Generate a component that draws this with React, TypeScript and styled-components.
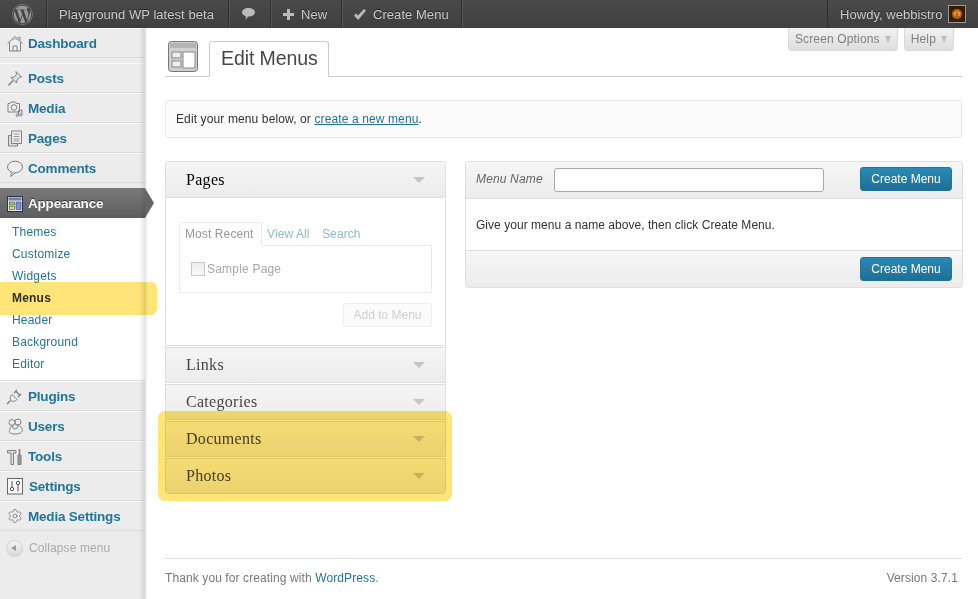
import React from "react";
import styled, { createGlobalStyle } from "styled-components";
import { FaWordpress } from "react-icons/fa";
import { Settings as GearIcon } from "lucide-react";

const Global = createGlobalStyle`
  html, body { margin: 0; padding: 0; background: #fff; height: 100%; overflow: hidden; }
  * { box-sizing: border-box; }
  body { font: 12px "Liberation Sans", Arial, sans-serif; color: #333; }
`;

const Page = styled.div`
  position: relative;
  width: 978px;
  height: 599px;
  overflow: hidden;
`;

const AdminBar = styled.header`
  display: flex;
  height: 28px;
  background: linear-gradient(#4a4a4a, #3f3f3f);
  color: #ccc;
  font-size: 13px;
  letter-spacing: 0.05px;
  text-shadow: 0 -1px 0 #222;
`;

const BarItem = styled.div<{ $w: number }>`
  display: flex;
  align-items: center;
  gap: 7px;
  width: ${(p) => p.$w}px;
  padding-left: 12px;
  border-right: 1px solid #2f2f2f;
  box-shadow: 1px 0 0 #555;
  &:last-child {
    gap: 5px;
    border-right: 0;
    box-shadow: none;
    margin-left: auto;
    border-left: 1px solid #2f2f2f;
  }
`;

const Avatar = styled.span`
  display: block;
  flex: none;
  width: 18px;
  height: 18px;
  border: 1px solid #999;
  background: #3a1c06;
  margin-left: 1px;
`;

const Shell = styled.div`
  display: grid;
  grid-template-columns: 145px 1fr;
  height: 571px;
`;

const Sidebar = styled.nav`
  background: #ececec;
  box-shadow: 1px 0 2px rgba(0, 0, 0, 0.15);
  position: relative;
  z-index: 1;
  &::after {
    content: "";
    position: absolute;
    top: 0;
    right: 0;
    bottom: 0;
    width: 6px;
    background: linear-gradient(90deg, rgba(0, 0, 0, 0), rgba(0, 0, 0, 0.1));
    pointer-events: none;
  }
`;

const MenuItem = styled.div<{ $gap?: boolean; $iconGap?: number }>`
  display: flex;
  align-items: center;
  height: 30px;
  padding-left: 7px;
  gap: ${(p) => p.$iconGap ?? 5}px;
  border-bottom: 1px solid #dadada;
  border-top: 1px solid #f8f8f8;
  margin-bottom: ${(p) => (p.$gap ? 5 : 0)}px;
  font-size: 13.5px;
  font-weight: 700;
  color: #21759b;
  letter-spacing: -0.2px;
`;

const ActiveItem = styled.div`
  position: relative;
  display: flex;
  align-items: center;
  height: 30px;
  padding-left: 7px;
  gap: 5px;
  background: linear-gradient(#7a7a7a, #5e5e5e);
  font-size: 13.5px;
  font-weight: 700;
  color: #fff;
  letter-spacing: -0.2px;
  text-shadow: 0 -1px 0 #333;
  &::after {
    content: "";
    position: absolute;
    left: 145px;
    top: 0;
    border-left: 9px solid #666;
    border-top: 15px solid transparent;
    border-bottom: 15px solid transparent;
  }
`;

const SubMenu = styled.div`
  background: #fff;
  height: 163px;
  padding-top: 3px;
  border-bottom: 1px solid #dfdfdf;
`;

const SubItem = styled.div<{ $current?: boolean }>`
  height: 22px;
  line-height: 22px;
  padding-left: 12px;
  font-size: 12px;
  letter-spacing: 0.2px;
  color: ${(p) => (p.$current ? "#333" : "#21759b")};
  font-weight: ${(p) => (p.$current ? 700 : 400)};
`;

const Collapse = styled.div`
  display: flex;
  align-items: center;
  gap: 6px;
  padding-left: 6px;
  color: #aaa;
  font-size: 12px;
  letter-spacing: 0.1px;
  height: 34px;
`;

const CollapseDot = styled.span`
  width: 17px;
  height: 17px;
  border-radius: 50%;
  border: 1px solid #d0d0d0;
  background: linear-gradient(#f4f4f4, #d9d9d9);
  display: flex;
  align-items: center;
  justify-content: center;
  &::before {
    content: "";
    border-right: 5px solid #999;
    border-top: 3px solid transparent;
    border-bottom: 3px solid transparent;
    margin-left: -2px;
  }
`;

const Main = styled.main`
  display: flex;
  flex-direction: column;
  padding: 0 16px 0 20px;
  min-width: 0;
`;

const ScreenMeta = styled.div`
  display: flex;
  justify-content: flex-end;
  gap: 6px;
  height: 13px;
  margin-right: 8px;
  align-items: flex-start;
`;

const MetaTab = styled.div`
  flex: none;
  display: flex;
  align-items: center;
  gap: 5px;
  height: 23px;
  padding: 0 6px;
  background: linear-gradient(#f1f1f1, #dedede);
  border: 1px solid #d9d9d9;
  border-top: 0;
  border-radius: 0 0 4px 4px;
  color: #808080;
  font-size: 12px;
  letter-spacing: 0.15px;
  &::after {
    content: "";
    border-top: 7px solid #bbb;
    border-left: 3.5px solid transparent;
    border-right: 3.5px solid transparent;
  }
`;

const TitleRow = styled.div`
  display: flex;
  align-items: flex-end;
  height: 36px;
  border-bottom: 1px solid #ccc;
  padding-left: 3px;
`;

const TitleIcon = styled.svg`
  width: 30px;
  height: 31px;
  margin-bottom: 4px;
  margin-right: 11px;
`;

const TitleTab = styled.h2`
  margin: 0 0 -1px;
  width: 120px;
  height: 36px;
  padding-left: 11px;
  line-height: 33px;
  font-size: 19.5px;
  letter-spacing: -0.1px;
  font-weight: 400;
  color: #464646;
  background: #fff;
  border: 1px solid #ccc;
  border-bottom-color: #fff;
  border-radius: 3px 3px 0 0;
`;

const Notice = styled.div`
  margin-top: 23px;
  height: 38px;
  line-height: 36px;
  padding-left: 10px;
  background: #fbfbfb;
  border: 1px solid #e8e8e8;
  border-radius: 3px;
  color: #333;
  font-size: 12px;
  letter-spacing: 0.12px;
  a { color: #21759b; text-decoration: underline; }
`;

const Columns = styled.div`
  display: flex;
  gap: 19px;
  margin-top: 23px;
`;

const LeftCol = styled.div`
  width: 281px;
  flex: none;
`;

const Accordion = styled.section<{ $open?: boolean }>`
  border: 1px solid #dfdfdf;
  border-radius: ${(p) => (p.$open ? "3px 3px 0 0" : "0")};
  margin-top: ${(p) => (p.$open ? 0 : 1)}px;
  &:last-child { border-radius: 0 0 3px 3px; }
`;

const AccordionHead = styled.div<{ $dark?: boolean }>`
  display: flex;
  align-items: center;
  justify-content: space-between;
  height: ${(p) => (p.$dark ? 36 : 34)}px;
  padding: 0 20px;
  background: linear-gradient(#f5f5f5, #ececec);
  border-bottom: ${(p) => (p.$dark ? "1px solid #dfdfdf" : "0")};
  font-family: "Liberation Serif", Georgia, serif;
  font-size: 16px;
  letter-spacing: 0.3px;
  color: ${(p) => (p.$dark ? "#000" : "#464646")};
  &::after {
    content: "";
    border-top: 6px solid #c6c6c6;
    border-left: 6px solid transparent;
    border-right: 6px solid transparent;
  }
`;

const AccordionBody = styled.div`
  height: 147px;
  padding: 24px 13px 0;
  background: #fff;
`;

const TabRow = styled.div`
  display: flex;
  height: 24px;
  margin-bottom: -1px;
  font-size: 12px;
`;

const TabActive = styled.span`
  width: 83px;
  padding: 4px 0 0 5px;
  color: #999;
  letter-spacing: 0.1px;
  border: 1px solid #ebebeb;
  border-bottom-color: #fff;
  border-radius: 3px 3px 0 0;
  background: #fff;
  position: relative;
  z-index: 1;
`;

const TabLink = styled.span`
  padding: 5px 0 0 5px;
  width: 55px;
  color: #8fbad0;
  letter-spacing: 0.1px;
`;

const TabPane = styled.div`
  height: 48px;
  border: 1px solid #ebebeb;
  display: flex;
  align-items: center;
  padding: 0 0 0 11px;
  gap: 2px;
  color: #a8a8a8;
  font-size: 12px;
  letter-spacing: 0.2px;
`;

const Check = styled.span`
  width: 14px;
  height: 14px;
  border: 1px solid #c8c8c8;
  background: linear-gradient(#ececec, #fafafa);
`;

const FadedBtnRow = styled.div`
  display: flex;
  justify-content: flex-end;
  margin-top: 10px;
`;

const FadedBtn = styled.span`
  width: 89px;
  height: 24px;
  line-height: 23px;
  text-align: center;
  border: 1px solid #eee;
  border-radius: 3px;
  background: #fbfbfb;
  color: #cfcfcf;
  font-size: 12px;
`;

const RightCol = styled.section`
  width: 498px;
  flex: none;
  border: 1px solid #dfdfdf;
  border-radius: 3px;
  height: 127px;
  overflow: hidden;
`;

const RightHead = styled.div`
  display: flex;
  align-items: center;
  height: 37px;
  padding: 0 10px;
  background: linear-gradient(#f6f6f6, #ececec);
  border-bottom: 1px solid #dfdfdf;
`;

const NameLabel = styled.label`
  width: 78px;
  margin-top: -2px;
  font-size: 12px;
  font-style: italic;
  letter-spacing: 0.15px;
  color: #666;
`;

const NameInput = styled.input`
  width: 270px;
  height: 24px;
  border: 1px solid #aaa;
  border-radius: 3px;
  background: #fff;
  margin-right: auto;
  outline: none;
`;

const PrimaryBtn = styled.button<{ $lift?: boolean }>`
  width: 92px;
  height: 24px;
  margin-top: ${(p) => (p.$lift ? -2 : 0)}px;
  padding: 0;
  border: 1px solid #21759b;
  border-radius: 3px;
  background: linear-gradient(#2a8ab5, #1f6f94);
  color: #fff;
  font: 12px "Liberation Sans", Arial, sans-serif;
`;

const RightBody = styled.div`
  height: 52px;
  padding: 0 10px;
  line-height: 52px;
  color: #333;
  font-size: 12px;
  letter-spacing: 0.04px;
  border-bottom: 1px solid #dfdfdf;
  background: #fff;
`;

const RightFoot = styled.div`
  display: flex;
  justify-content: flex-end;
  align-items: center;
  height: 36px;
  padding: 0 10px;
  background: linear-gradient(#f6f6f6, #ececec);
`;

const Footer = styled.footer`
  display: flex;
  justify-content: space-between;
  margin-top: auto;
  margin-bottom: 14px;
  height: 27px;
  padding: 12px 4px 0 0;
  border-top: 1px solid #dfdfdf;
  color: #777;
  font-size: 12px;
  letter-spacing: 0.1px;
  a { color: #21759b; }
`;

const Highlight = styled.div<{ $x: number; $y: number; $w: number; $h: number; $r: string }>`
  position: absolute;
  left: ${(p) => p.$x}px;
  top: ${(p) => p.$y}px;
  width: ${(p) => p.$w}px;
  height: ${(p) => p.$h}px;
  border-radius: ${(p) => p.$r};
  background: #ffe478;
  mix-blend-mode: multiply;
  z-index: 5;
  pointer-events: none;
`;

const IconBox = styled.svg`
  width: 16px;
  height: 17px;
  flex: none;
  overflow: visible;
`;

type IP = { children: React.ReactNode };
const Ico = ({ children }: IP) => (
  <IconBox viewBox="0 0 16 17" fill="#eee" stroke="#808080" strokeWidth="1">
    {children}
  </IconBox>
);

const icons: Record<string, React.ReactNode> = {
  house: (
    <Ico>
      <path d="M.5 8.500 8 1.500l7.500 7M2.500 7.500v8.500h11V7.500" />
      <path d="M6 16v-5h4v5M11 2.500h2v3" fill="none" />
      <path d="M3 6 8 3.500 13 6" fill="none" stroke="#aaa" />
    </Ico>
  ),
  pin: (
    <Ico>
      <path d="M9 1.500 14.500 7l-2 .5-2.500 2.500-.5 3L4 7.500l3-.5L9.500 4.500z" fill="#ddd" />
      <path d="M6 10.500 1.500 15.500" strokeWidth="1.400" />
    </Ico>
  ),
  media: (
    <Ico>
      <path d="M1 3.500h2l1-1.500h4l1 1.500h3.500V12H1z" />
      <circle cx="7" cy="7.500" r="2.800" />
      <path d="M11.500 10.500v4.500M15 10v4.500M11.500 10.500 15 10" fill="none" />
      <circle cx="10.300" cy="15.200" r="1.200" />
      <circle cx="13.800" cy="14.800" r="1.200" />
    </Ico>
  ),
  pages: (
    <Ico>
      <path d="M1.500 5.500h9V16h-9z" fill="#ddd" />
      <path d="M4.500 1h10v12.500h-10z" />
      <path d="M6.500 4h6M6.500 6.500h6M6.500 9h6M6.500 11h6" fill="none" strokeWidth=".8" />
    </Ico>
  ),
  comment: (
    <Ico>
      <ellipse cx="8" cy="7" rx="7.500" ry="5.800" />
      <path d="M5 12.500 3.500 16.500 8.500 12.800" />
    </Ico>
  ),
  appearance: (
    <IconBox viewBox="0 0 16 17">
      <rect x=".5" y="1.500" width="15" height="15" fill="#dfe6f1" stroke="#2c3346" />
      <rect x="1.500" y="2.500" width="13" height="3" fill="#6f7fa8" />
      <rect x="2.500" y="7" width="5" height="3" fill="#9ccb55" stroke="#333" strokeWidth=".5" />
      <rect x="2.500" y="11.500" width="5" height="3" fill="#cfe07c" stroke="#333" strokeWidth=".5" />
      <rect x="9" y="7" width="5" height="7.500" fill="#7b8fe0" stroke="#333" strokeWidth=".5" />
    </IconBox>
  ),
  plug: (
    <Ico>
      <path d="M5 6.500 10 11.500c-2 2-4.500 2.500-6 1S3 8.500 5 6.500z" />
      <path d="M7 5 10 2M11 9l3-3M9 3.500l4 4" fill="none" strokeWidth="1.400" />
      <path d="M3.500 12.500 0 16" fill="none" strokeWidth="1.200" />
    </Ico>
  ),
  users: (
    <Ico>
      <circle cx="5" cy="4.500" r="3" />
      <circle cx="11" cy="4" r="3" />
      <path d="M3 11c0-2.500 2-3.500 5-3.500S15 8.500 15 11c1 2-.5 5-7 5S2 13 3 11z" />
      <circle cx="8" cy="8.500" r="2.500" />
    </Ico>
  ),
  tools: (
    <Ico>
      <path d="M.5 2.500h8.500v2.500H6.500v11.500h-2.500V5H.5z" fill="#ddd" />
      <path d="M12.500 1v6" fill="none" strokeWidth="1.600" />
      <path d="M11 7h3v9.500h-3z" fill="#999" />
    </Ico>
  ),
  settings: (
    <Ico>
      <rect x=".5" y=".5" width="15" height="15.500" fill="#f6f6f6" stroke="#666" />
      <path d="M5 3v6M11 7v6.500" fill="none" stroke="#555" />
      <circle cx="5" cy="11" r="1.700" fill="none" stroke="#555" />
      <circle cx="11" cy="5" r="1.700" fill="none" stroke="#555" />
    </Ico>
  ),
};

const topItems = [
  { icon: "pin", label: "Posts" },
  { icon: "media", label: "Media" },
  { icon: "pages", label: "Pages" },
];
const lowerItems = [
  { icon: "plug", label: "Plugins" },
  { icon: "users", label: "Users" },
  { icon: "tools", label: "Tools" },
  { icon: "settings", label: "Settings", iconGap: 6 },
];
const subItems = ["Themes", "Customize", "Widgets", "Menus", "Header", "Background", "Editor"];

export default function App() {
  return (
    <Page>
      <Global />
      <AdminBar>
        <BarItem $w={47}>
          <FaWordpress size={21} color="#999" />
        </BarItem>
        <BarItem $w={182}>Playground WP latest beta</BarItem>
        <BarItem $w={42}>
          <svg width="15" height="14" viewBox="0 0 15 14" fill="#bbb">
            <path d="M7.500 1c3.600 0 6.500 1.900 6.500 4.300s-2.900 4.300-6.500 4.300H7L4.500 13l.3-3.700C2.600 8.600 1 7.100 1 5.300 1 2.900 3.900 1 7.500 1z" />
          </svg>
        </BarItem>
        <BarItem $w={71}>
          <svg width="11" height="11" viewBox="0 0 11 11" fill="#bbb">
            <path d="M4 0h3v4h4v3H7v4H4V7H0V4h4z" />
          </svg>
          New
        </BarItem>
        <BarItem $w={120}>
          <svg width="12" height="11" viewBox="0 0 12 11" fill="#bbb">
            <path d="M0 6.500 2 4.500l2 2L10 0l2 1.500L4.200 11z" />
          </svg>
          Create Menu
        </BarItem>
        <BarItem $w={151}>
          Howdy, webbistro
          <Avatar>
            <svg width="16" height="16" viewBox="0 0 16 16">
              <circle cx="8" cy="8" r="5" fill="#b8640f" />
              <path d="M5 8c1-3 5-3 6 0M6 7v3M10 7v3" stroke="#f2b23c" fill="none" strokeWidth="1.200" />
            </svg>
          </Avatar>
        </BarItem>
      </AdminBar>
      <Shell>
        <Sidebar>
          <MenuItem $gap>
            {icons.house}Dashboard
          </MenuItem>
          {topItems.map((m) => (
            <MenuItem key={m.label}>
              {icons[m.icon]}
              {m.label}
            </MenuItem>
          ))}
          <MenuItem $gap>{icons.comment}Comments</MenuItem>
          <ActiveItem>{icons.appearance}Appearance</ActiveItem>
          <SubMenu>
            {subItems.map((s) => (
              <SubItem key={s} $current={s === "Menus"}>
                {s}
              </SubItem>
            ))}
          </SubMenu>
          {lowerItems.map((m) => (
            <MenuItem key={m.label} $iconGap={m.iconGap}>
              {icons[m.icon]}
              {m.label}
            </MenuItem>
          ))}
          <MenuItem>
            <GearIcon size={16} color="#808080" strokeWidth={1.3} />
            Media Settings
          </MenuItem>
          <Collapse>
            <CollapseDot />
            Collapse menu
          </Collapse>
        </Sidebar>
        <Main>
          <ScreenMeta>
            <MetaTab>Screen Options</MetaTab>
            <MetaTab>Help</MetaTab>
          </ScreenMeta>
          <TitleRow>
            <TitleIcon viewBox="0 0 30 31">
              <rect x=".5" y=".5" width="29" height="30" rx="3" fill="#d0d0d0" stroke="#777" />
              <rect x="2" y="2" width="26" height="5" fill="#b5b5b5" />
              <rect x="4" y="11" width="9" height="6" fill="#eee" stroke="#888" />
              <rect x="4" y="20" width="9" height="6" fill="#eee" stroke="#888" />
              <rect x="15" y="11" width="12" height="16" fill="#fff" stroke="#888" />
            </TitleIcon>
            <TitleTab>Edit Menus</TitleTab>
          </TitleRow>
          <Notice>
            Edit your menu below, or <a>create a new menu</a>.
          </Notice>
          <Columns>
            <LeftCol>
              <Accordion $open>
                <AccordionHead $dark>Pages</AccordionHead>
                <AccordionBody>
                  <TabRow>
                    <TabActive>Most Recent</TabActive>
                    <TabLink>View All</TabLink>
                    <TabLink>Search</TabLink>
                  </TabRow>
                  <TabPane>
                    <Check />
                    Sample Page
                  </TabPane>
                  <FadedBtnRow>
                    <FadedBtn>Add to Menu</FadedBtn>
                  </FadedBtnRow>
                </AccordionBody>
              </Accordion>
              {["Links", "Categories", "Documents", "Photos"].map((t) => (
                <Accordion key={t}>
                  <AccordionHead>{t}</AccordionHead>
                </Accordion>
              ))}
            </LeftCol>
            <RightCol>
              <RightHead>
                <NameLabel>Menu Name</NameLabel>
                <NameInput />
                <PrimaryBtn $lift>Create Menu</PrimaryBtn>
              </RightHead>
              <RightBody>Give your menu a name above, then click Create Menu.</RightBody>
              <RightFoot>
                <PrimaryBtn>Create Menu</PrimaryBtn>
              </RightFoot>
            </RightCol>
          </Columns>
          <Footer>
            <span>
              Thank you for creating with <a>WordPress</a>.
            </span>
            <span>Version 3.7.1</span>
          </Footer>
        </Main>
      </Shell>
      <Highlight $x={0} $y={282} $w={157} $h={33} $r="0 6px 6px 0" />
      <Highlight $x={158} $y={411} $w={294} $h={90} $r="7px" />
    </Page>
  );
}
